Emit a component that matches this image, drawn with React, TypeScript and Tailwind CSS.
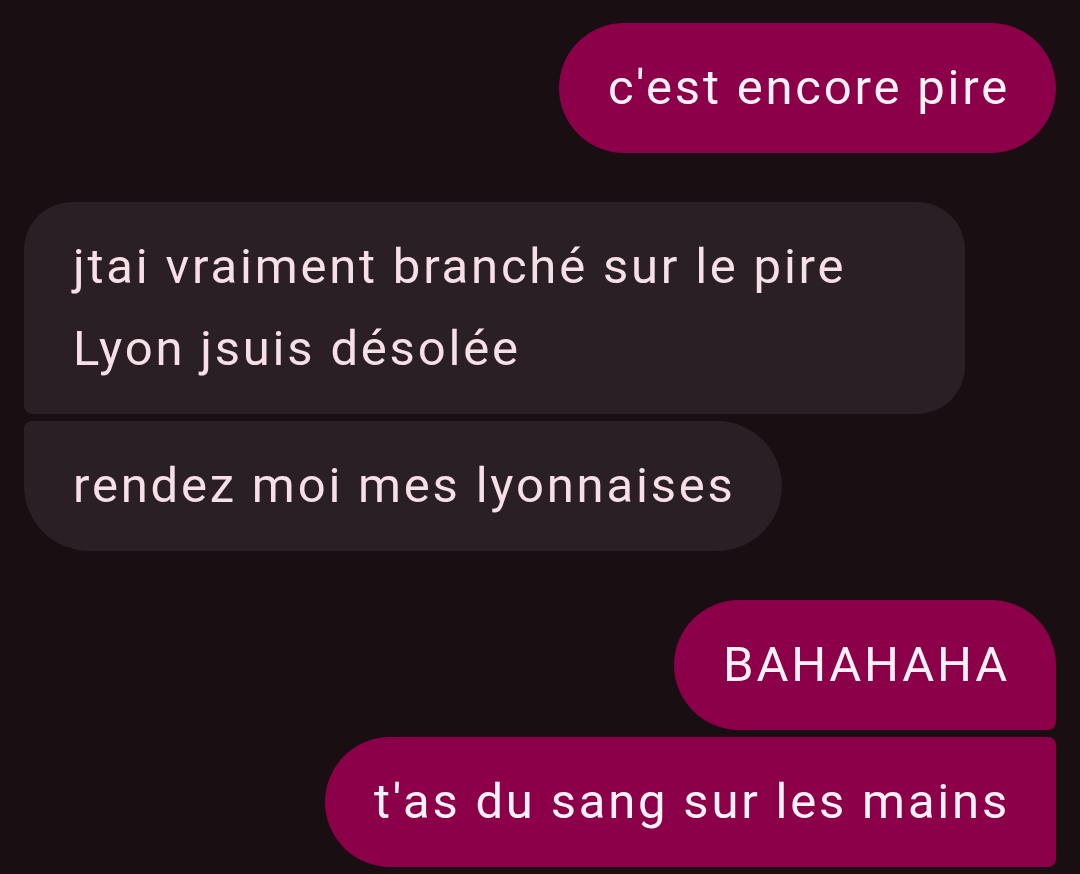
const sent = 'bg-[#8c0049] text-[#fff1f6]';
const recv = 'bg-[#2a1f24] text-[#f7dfe7]';

function Bubble({ text, className }: { text: string; className: string }) {
  return (
    <div
      className={`max-w-[941px] pl-[49px] pr-[46px] py-6 text-[49px] leading-[82px] tracking-[2.8px] ${className}`}
    >
      {text}
    </div>
  );
}

export default function App() {
  return (
    <div
      className="min-h-screen w-[1080px] bg-[#190f12] px-6 pt-[23px] flex flex-col"
      style={{ fontFamily: 'Roboto, "Noto Sans", sans-serif' }}
    >
      <div className="flex justify-end">
        <Bubble text="c'est encore pire" className={`${sent} rounded-full`} />
      </div>

      <div className="mt-[49px] flex flex-col items-start gap-[7px]">
        <Bubble
          text="jtai vraiment branché sur le pire Lyon jsuis désolée"
          className={`${recv} rounded-[48px] rounded-bl-[8px]`}
        />
        <Bubble
          text="rendez moi mes lyonnaises"
          className={`${recv} rounded-[65px] rounded-tl-[8px]`}
        />
      </div>

      <div className="mt-[49px] flex flex-col items-end gap-[7px]">
        <Bubble text="BAHAHAHA" className={`${sent} rounded-[65px] rounded-br-[8px]`} />
        <Bubble
          text="t'as du sang sur les mains"
          className={`${sent} rounded-[65px] rounded-r-[8px]`}
        />
      </div>
    </div>
  );
}
